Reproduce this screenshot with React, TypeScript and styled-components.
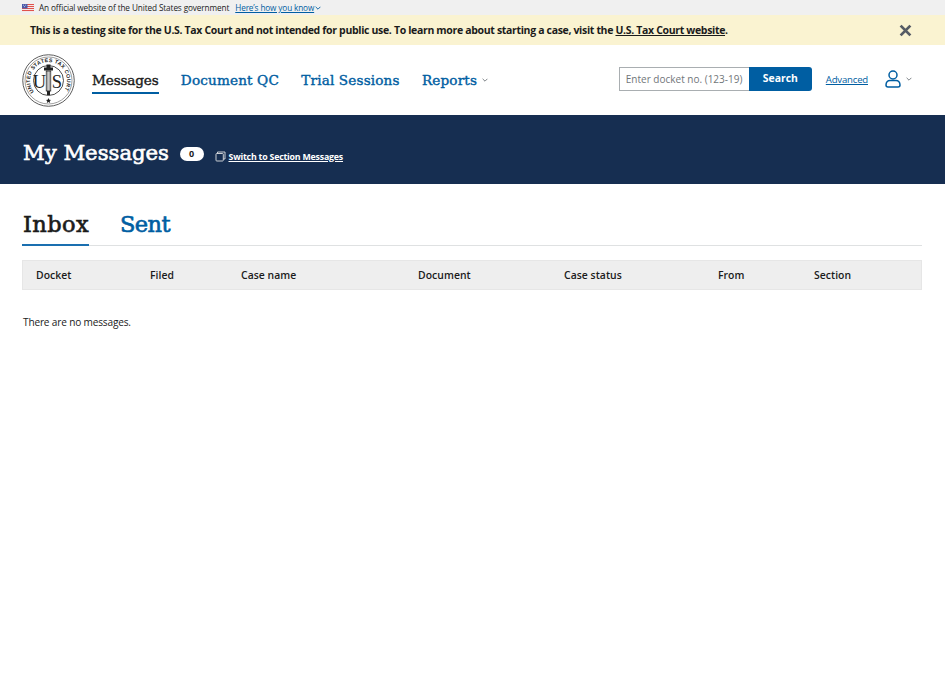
import React from "react";
import styled, { createGlobalStyle } from "styled-components";

const sans = `"Open Sans", "Noto Sans", "Liberation Sans", sans-serif`;
const serif = `"DejaVu Serif", "Liberation Serif", serif`;

const Global = createGlobalStyle`
  html, body { margin: 0; padding: 0; background: #fff; }
  body { font-family: ${sans}; color: #1b1b1b; }
  * { box-sizing: border-box; }
`;

const GovBanner = styled.div`
  height: 15px; background: #f0f0f0; display: flex; align-items: center;
  padding-left: 22px; font-size: 8.2px; letter-spacing: -0.1px; color: #1b1b1b;
`;
const FlagSvg = styled.svg`width: 12px; height: 8px; margin-right: 5px; flex: none;`;
const GovLink = styled.a`
  color: #005ea2; text-decoration: underline; margin-left: 6px; display: inline-flex; align-items: center; gap: 1px;
  letter-spacing: -0.12px;
`;
const AlertBar = styled.div`
  height: 30px; background: #faf3d1; display: flex; align-items: center; justify-content: space-between;
  padding: 0 33px 0 30px; font-size: 10.5px; font-weight: 700; letter-spacing: -0.33px; color: #1b1b1b;
`;
const AlertLink = styled.a`color: #1b1b1b; text-decoration: underline;`;
const CloseBtn = styled.div`display: flex; color: #565c65;`;
const Header = styled.header`
  height: 70px; background: #fff; display: flex; align-items: center; padding: 0 33px 0 22px;
`;
const Seal = styled.svg`width: 53px; height: 53px; flex: none; margin-right: 17px;`;
const Nav = styled.nav`display: flex; align-items: center; gap: 22.3px; flex: 1; height: 100%;`;
const NavItem = styled.a<{ $active?: boolean }>`
  font-family: ${serif}; font-size: 13.6px; font-weight: 400; -webkit-text-stroke: 0.4px currentColor;
  letter-spacing: ${(p) => (p.$active ? "-0.15px" : "0.15px")};
  color: ${(p) => (p.$active ? "#1b1b1b" : "#005ea2")};
  display: inline-flex; align-items: center; gap: 5px; height: 29px; margin-top: -1px; padding-top: 2px;
  border-bottom: 2px solid ${(p) => (p.$active ? "#005ea2" : "transparent")};
`;
const SearchForm = styled.form`display: flex; height: 24px; margin: 0 14px 2px 0;`;
const SearchInput = styled.div`
  width: 130px; border: 1px solid #a9aeb1; border-right: none; background: #fff; color: #71767a;
  font-size: 10px; letter-spacing: 0; display: flex; align-items: center; padding-left: 6px; white-space: nowrap;
`;
const SearchButton = styled.div`
  width: 63px; background: #005ea2; color: #fff; font-size: 10.4px; font-weight: 700; border-radius: 0 3px 3px 0;
  display: flex; align-items: center; justify-content: center; padding-bottom: 2px;
`;
const AdvancedLink = styled.a`
  color: #005ea2; text-decoration: underline; font-size: 9.6px; letter-spacing: -0.2px; margin: 0 17px 2px 0;
`;
const Hero = styled.section`
  height: 69px; background: #162e51; display: flex; align-items: center; padding: 5px 22px 0 23px; color: #fff;
`;
const HeroTitle = styled.h1`
  font-family: ${serif}; font-size: 21.2px; font-weight: 400; -webkit-text-stroke: 0.65px currentColor;
  letter-spacing: 0; margin: 0 10.5px 0 0; color: #fff;
`;
const Badge = styled.span`
  width: 24px; height: 14px; border-radius: 7px; background: #fff; color: #1b1b1b; font-size: 9px; font-weight: 700;
  display: flex; align-items: center; justify-content: center; margin-right: 11px; margin-top: 3px;
`;
const SwitchLink = styled.a`
  color: #fff; font-size: 8.8px; font-weight: 700; letter-spacing: -0.2px; text-decoration: underline;
  display: inline-flex; align-items: center; gap: 3px; margin-top: 9px;
`;
const Main = styled.main`padding: 0 23px 0 22px;`;
const Tabs = styled.div`
  display: flex; gap: 30px; height: 62px; border-bottom: 1px solid #dfe1e2; align-items: flex-end;
`;
const Tab = styled.a<{ $active?: boolean }>`
  font-family: ${serif}; font-size: 22.5px; font-weight: 400; -webkit-text-stroke: 0.65px currentColor;
  letter-spacing: ${(p) => (p.$active ? "0.4px" : "-0.6px")}; height: 38px; line-height: 32px; padding: 0 0 0 1px;
  margin-bottom: -1px; color: ${(p) => (p.$active ? "#1b1b1b" : "#005ea2")};
  border-bottom: 2px solid ${(p) => (p.$active ? "#1a6fb0" : "transparent")};
`;
const TableHead = styled.div`
  margin-top: 14px; height: 30px; background: #eee; border: 1px solid #e6e6e6; display: grid;
  grid-template-columns: 114px 91px 177px 146px 154px 96px 1fr; align-items: center;
`;
const HeadCell = styled.div`
  font-size: 10.4px; font-weight: 600; letter-spacing: 0.05px; padding-left: 13px; color: #1b1b1b;
`;
const Empty = styled.p`margin: 25px 0 0 1px; font-size: 10.1px; letter-spacing: -0.17px; line-height: 14px; color: #1b1b1b;`;
const UserMenu = styled.div`display: flex; align-items: center; gap: 5px; margin-bottom: 2px;`;

const Chevron = ({ size = 6, color = "currentColor" }: { size?: number; color?: string }) => (
  <svg width={size} height={size} viewBox="0 0 10 10" fill="none" stroke={color} strokeWidth="1.5">
    <path d="M1 3l4 4 4-4" />
  </svg>
);

const SealMark = () => (
  <Seal viewBox="0 0 106 106">
    <defs>
      <path id="arc" d="M24 76a37 37 0 1 1 58 0" />
    </defs>
    <circle cx="53" cy="53" r="51.5" fill="#fff" stroke="#333" strokeWidth="1.6" />
    <circle cx="53" cy="53" r="47" fill="none" stroke="#777" strokeWidth="1.4" />
    <circle cx="53" cy="53" r="30" fill="none" stroke="#222" strokeWidth="1.6" />
    <text fontFamily="Liberation Sans, sans-serif" fontSize="10.5" fontWeight="700" fill="#222">
      <textPath href="#arc" startOffset="0" textLength="160">UNITED STATES TAX COURT</textPath>
    </text>
    <text x="35" y="67" fontFamily="Liberation Serif, serif" fontSize="37" fill="#222" textAnchor="middle">U</text>
    <text x="70" y="67" fontFamily="Liberation Serif, serif" fontSize="37" fill="#222" textAnchor="middle">S</text>
    <rect x="48.5" y="34" width="9" height="40" fill="#fff" stroke="#222" strokeWidth="1.6" />
    <path d="M51.5 34v40M54.5 34v40" stroke="#222" strokeWidth="1" />
    <path d="M44 27h18v6H44zM49 21h8v6h-8z" fill="#222" />
    <path d="M50 74h6v8h-6z" fill="#222" />
    <path d="M53 88l1.6 3.4 3.6.4-2.7 2.4.8 3.6-3.3-1.9-3.3 1.9.8-3.6-2.7-2.4 3.6-.4z" fill="#222" />
  </Seal>
);

export default function App() {
  return (
    <>
      <Global />
      <GovBanner>
        <FlagSvg viewBox="0 0 12 8">
          <rect width="12" height="8" fill="#f2e8e8" />
          <path d="M0 .5h12M0 2.5h12M0 4.5h12M0 6.5h12" stroke="#e0524c" strokeWidth="1" />
          <rect width="5.5" height="4.4" fill="#4a5aa8" />
          <path d="M1.2 1.2h.8M3.3 1.2h.8M2.2 2.6h.8" stroke="#fff" strokeWidth="0.7" />
        </FlagSvg>
        An official website of the United States government
        <GovLink>Here’s how you know<Chevron /></GovLink>
      </GovBanner>
      <AlertBar>
        <span>
          This is a testing site for the U.S. Tax Court and not intended for public use. To learn more about starting a case, visit the{" "}
          <AlertLink>U.S. Tax Court website</AlertLink>.
        </span>
        <CloseBtn>
          <svg width="13" height="13" viewBox="0 0 12 12" fill="none" stroke="currentColor" strokeWidth="2.6">
            <path d="M1.5 1.5l9 9M10.5 1.5l-9 9" />
          </svg>
        </CloseBtn>
      </AlertBar>
      <Header>
        <SealMark />
        <Nav>
          <NavItem $active>Messages</NavItem>
          <NavItem>Document QC</NavItem>
          <NavItem>Trial Sessions</NavItem>
          <NavItem>Reports<Chevron color="#71767a" /></NavItem>
        </Nav>
        <SearchForm>
          <SearchInput>Enter docket no. (123-19)</SearchInput>
          <SearchButton>Search</SearchButton>
        </SearchForm>
        <AdvancedLink>Advanced</AdvancedLink>
        <UserMenu>
          <svg width="16" height="18" viewBox="0 0 16 18" fill="none" stroke="#005ea2" strokeWidth="1.5">
            <circle cx="8" cy="5" r="4" />
            <path d="M1 15c0-3 2-4.6 4-4.6h6c2 0 4 1.6 4 4.6 0 1.4-.8 2-2 2H3c-1.2 0-2-.6-2-2z" />
          </svg>
          <Chevron color="#71767a" />
        </UserMenu>
      </Header>
      <Hero>
        <HeroTitle>My Messages</HeroTitle>
        <Badge>0</Badge>
        <SwitchLink>
          <svg width="11" height="11" viewBox="0 0 11 11" fill="none" stroke="#dfe1e2" strokeWidth="0.9">
            <path d="M2.5 2.5V1h7.5v7H8.3" />
            <rect x="1" y="2.5" width="7.3" height="7.5" rx="0.8" />
          </svg>
          Switch to Section Messages
        </SwitchLink>
      </Hero>
      <Main>
        <Tabs>
          <Tab $active>Inbox</Tab>
          <Tab>Sent</Tab>
        </Tabs>
        <TableHead>
          {["Docket", "Filed", "Case name", "Document", "Case status", "From", "Section"].map((h) => (
            <HeadCell key={h}>{h}</HeadCell>
          ))}
        </TableHead>
        <Empty>There are no messages.</Empty>
      </Main>
    </>
  );
}
